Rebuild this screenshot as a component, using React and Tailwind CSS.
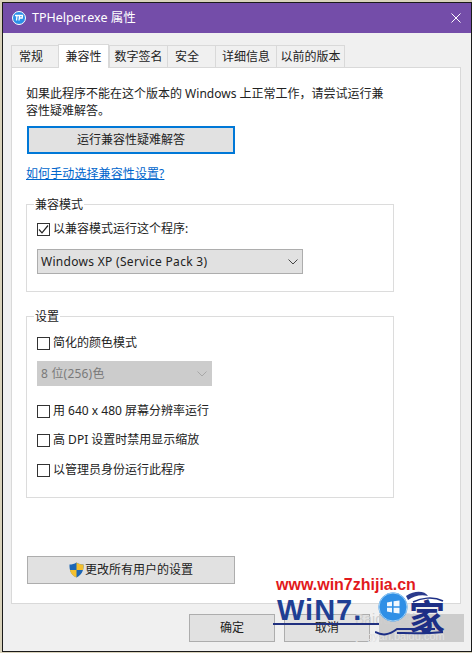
const uiFont = "font-['Noto_Sans','Noto_Sans_CJK_SC',sans-serif]";

const tabs = [
    { label: "常规", box: "w-[47px] justify-start pl-[7px]" },
    { label: "兼容性", box: "w-[51px] justify-center", active: true },
    { label: "数字签名", box: "w-[58px] justify-center" },
    { label: "安全", box: "w-[48px] justify-start pl-[7px]" },
    { label: "详细信息", box: "w-[61px] justify-center" },
    { label: "以前的版本", box: "w-[69px] justify-center" },
];

const Checkbox = ({ checked, label, className = "" }) => (
    <div className={`flex items-center h-[14px] ${className}`}>
        <span className="w-[13px] h-[13px] border border-[#333333] bg-white flex items-center justify-center shrink-0">
            {checked && (
                <svg width="11" height="11" viewBox="0 0 11 11" fill="none">
                    <path d="M1 5.5 L4 8.8 L10 1.5" stroke="#222222" strokeWidth="1.2" />
                </svg>
            )}
        </span>
        <span className="ml-[3px] text-[12px] leading-[14px] text-[#222222] whitespace-nowrap">{label}</span>
    </div>
);

const Chevron = ({ color }) => (
    <svg width="10" height="6" viewBox="0 0 10 6" fill="none">
        <path d="M0.5 0.5 L5 5 L9.5 0.5" stroke={color} strokeWidth="1" />
    </svg>
);

const Button = ({ children, className = "" }) => (
    <div className={`flex items-center justify-center text-[12px] text-[#222222] bg-[#e1e1e1] border border-[#adadad] ${className}`}>
        {children}
    </div>
);

const Shield = () => (
    <svg width="15" height="16" viewBox="0 0 15 16" className="shrink-0">
        <path d="M7.5 0.5 C9.5 2 12 2.6 14.5 2.6 C14.8 9 12.5 13.3 7.5 15.5 C2.5 13.3 0.2 9 0.5 2.6 C3 2.6 5.5 2 7.5 0.5 Z" fill="#1c66b5" />
        <path d="M7.5 0.5 C9.5 2 12 2.6 14.5 2.6 C14.6 4.6 14.5 6.4 14.1 8 L7.5 8 Z" fill="#f4c02e" />
        <path d="M7.5 8 L0.9 8 C1.7 11.4 3.8 13.9 7.5 15.5 Z" fill="#f4c02e" />
    </svg>
);

// watermark pasted over the bottom right corner
const Watermark = () => (
    <div className="absolute left-[270px] top-[570px] w-[202px] h-[83px] overflow-hidden">
        <div className="absolute left-[85px] top-[41px] text-[14px] leading-[16px] text-[#cfcfcf] font-['Liberation_Sans',sans-serif] whitespace-nowrap">
            Baidu经验
        </div>
        <div className="absolute left-[86px] top-[60px] text-[11px] leading-[12px] text-[#e2e2e2] font-['Liberation_Sans',sans-serif] whitespace-nowrap">
            jingyan.baidu.com
        </div>
        <div className="absolute left-[6px] top-[5px] text-[16px] leading-[20px] font-bold text-[#e2191c] font-['Liberation_Sans',sans-serif] whitespace-nowrap">
            www.win7zhijia.cn
        </div>
        <div className="absolute left-[7px] top-[24px] text-[29px] leading-[32px] font-bold text-[#1f3f94] font-['Liberation_Sans',sans-serif] tracking-[1px] whitespace-nowrap">
            WiN7.
        </div>
        <div className="absolute left-[3px] top-[53px] w-[106px] h-[2px] bg-[#20307f]" />
        <div className="absolute left-[139px] top-[26px] text-[36px] leading-[38px] font-bold text-[#1d2f86] font-['Noto_Sans_CJK_SC',sans-serif]">
            家
        </div>
        <svg className="absolute left-[105px] top-[18px]" width="97" height="65" viewBox="0 0 97 65" fill="none">
            <circle cx="18" cy="19" r="14.5" fill="#2f8fe6" />
            <circle cx="18" cy="19" r="14" fill="none" stroke="#9fd0f5" strokeWidth="1" />
            <path d="M12 14.5 L17 13.6 L17 18.2 L12 18.2 Z M18.6 13.3 L24.5 12.4 L24.5 18.2 L18.6 18.2 Z M12 19.8 L17 19.8 L17 24.4 L12 23.6 Z M18.6 19.8 L24.5 19.8 L24.5 25.6 L18.6 24.7 Z" fill="#f2f8fe" />
            <path d="M31 8 C40 2 50 3 53 8 C46 6 39 8 33 12 Z" fill="#2a3a8c" />
            <path d="M38 14 C46 10 58 8 68 13" stroke="#1d2f86" strokeWidth="1.5" />
            <path d="M0 44 C8 48 14 47 22 41 L60 41 M22 45 C30 45 50 46 68 44" stroke="#1d2f86" strokeWidth="2" />
        </svg>
    </div>
);

const App = () => {
    return (
        <div className={`relative w-[472px] h-[653px] overflow-hidden bg-[#d9d2bb] pl-[2px] pt-[2px] ${uiFont}`}>
            <div className="w-[470px] h-[650px] border border-[#1a1a1a] bg-[#f0f0f0] flex flex-col">
                {/* Title bar */}
                <div className="h-[30px] shrink-0 bg-[#744da9] flex items-center pl-[9px] pr-[10px] text-white">
                    <svg width="14" height="14" viewBox="0 0 14 14" className="shrink-0">
                        <circle cx="7" cy="7" r="6.5" fill="#2b8fe8" />
                        <circle cx="7" cy="7" r="6.5" fill="none" stroke="#ffffff" strokeWidth="1" />
                        <path d="M3 4.5 L7 4.5 M5 4.5 L4.5 9.5 M7 9.5 L7.6 4.5 L10.5 4.5 L10.2 7 L7.5 7" stroke="#ffffff" strokeWidth="1.3" fill="none" />
                    </svg>
                    <span className="ml-[6px] text-[12.5px] whitespace-nowrap">TPHelper.exe 属性</span>
                    <svg width="10" height="10" viewBox="0 0 10 10" className="ml-auto" fill="none">
                        <path d="M0.5 0.5 L9.5 9.5 M9.5 0.5 L0.5 9.5" stroke="#ffffff" strokeWidth="1" />
                    </svg>
                </div>

                {/* Tabs */}
                <div className="flex items-end h-[24px] mt-[10px] ml-[8px] relative z-10">
                    {tabs.map((tab) => (
                        <div
                            key={tab.label}
                            className={`${tab.box} flex items-center text-[12px] text-[#222222] border-[#d9d9d9] ${
                                tab.active
                                    ? "h-[24px] -mb-px bg-white border-x border-t"
                                    : "h-[22px] bg-[#f0f0f0] border-l border-t last:border-r"
                            }`}
                        >
                            {tab.label}
                        </div>
                    ))}
                </div>

                {/* Panel */}
                <div className="w-[450px] h-[537px] ml-[8px] bg-white border border-[#d9d9d9] pl-[14px] flex flex-col text-[#222222]">
                    <p className="mt-[17px] w-[366px] text-[12px] leading-[17px]">
                        如果此程序不能在这个版本的 Windows 上正常工作，请尝试运行兼容性疑难解答。
                    </p>
                    <Button className="mt-[7px] ml-px w-[208px] h-[28px] !border-2 !border-[#0078d7]">
                        运行兼容性疑难解答
                    </Button>
                    <a className="mt-[11px] w-fit text-[12px] leading-[18px] text-[#0066cc] underline tracking-[0.1px]">如何手动选择兼容性设置?</a>

                    <fieldset className="mt-[13px] w-[368px] h-[96px] border border-[#dcdcdc] pl-[10px]">
                        <legend className="-ml-[3px] px-px text-[12px] leading-[16px] translate-y-px">兼容模式</legend>
                        <Checkbox checked label="以兼容模式运行这个程序:" className="mt-[10px]" />
                        <div className="mt-[13px] w-[266px] h-[25px] bg-[#e1e1e1] border border-[#adadad] flex items-center justify-between pl-[3px] pr-[4px] text-[12px] tracking-[0.3px]">
                            Windows XP (Service Pack 3)
                            <Chevron color="#444444" />
                        </div>
                    </fieldset>

                    <fieldset className="mt-[16px] w-[368px] h-[190px] border border-[#dcdcdc] pl-[10px]">
                        <legend className="-ml-[3px] px-px text-[12px] leading-[16px] translate-y-px">设置</legend>
                        <Checkbox label="简化的颜色模式" className="mt-[12px]" />
                        <div className="mt-[11px] w-[175px] h-[25px] bg-[#cccccc] flex items-center justify-between pl-[4px] pr-[5px] text-[12px] text-[#7a7a7a] tracking-[0.2px]">
                            8 位(256)色
                            <Chevron color="#a8a8a8" />
                        </div>
                        <Checkbox label="用 640 x 480 屏幕分辨率运行" className="mt-[18px]" />
                        <Checkbox label="高 DPI 设置时禁用显示缩放" className="mt-[15px]" />
                        <Checkbox label="以管理员身份运行此程序" className="mt-[16px]" />
                    </fieldset>

                    <Button className="mt-[58px] ml-px w-[208px] h-[28px] gap-px">
                        <Shield />
                        更改所有用户的设置
                    </Button>
                </div>

                {/* Footer buttons */}
                <div className="flex mt-[10px] ml-[186px] gap-[9px]">
                    <Button className="w-[86px] h-[28px]">确定</Button>
                    <Button className="w-[86px] h-[28px]">取消</Button>
                    <div className="w-[85px] h-[28px] bg-[#cccccc]" />
                </div>
            </div>
            <Watermark />
        </div>
    );
};

export default App;
